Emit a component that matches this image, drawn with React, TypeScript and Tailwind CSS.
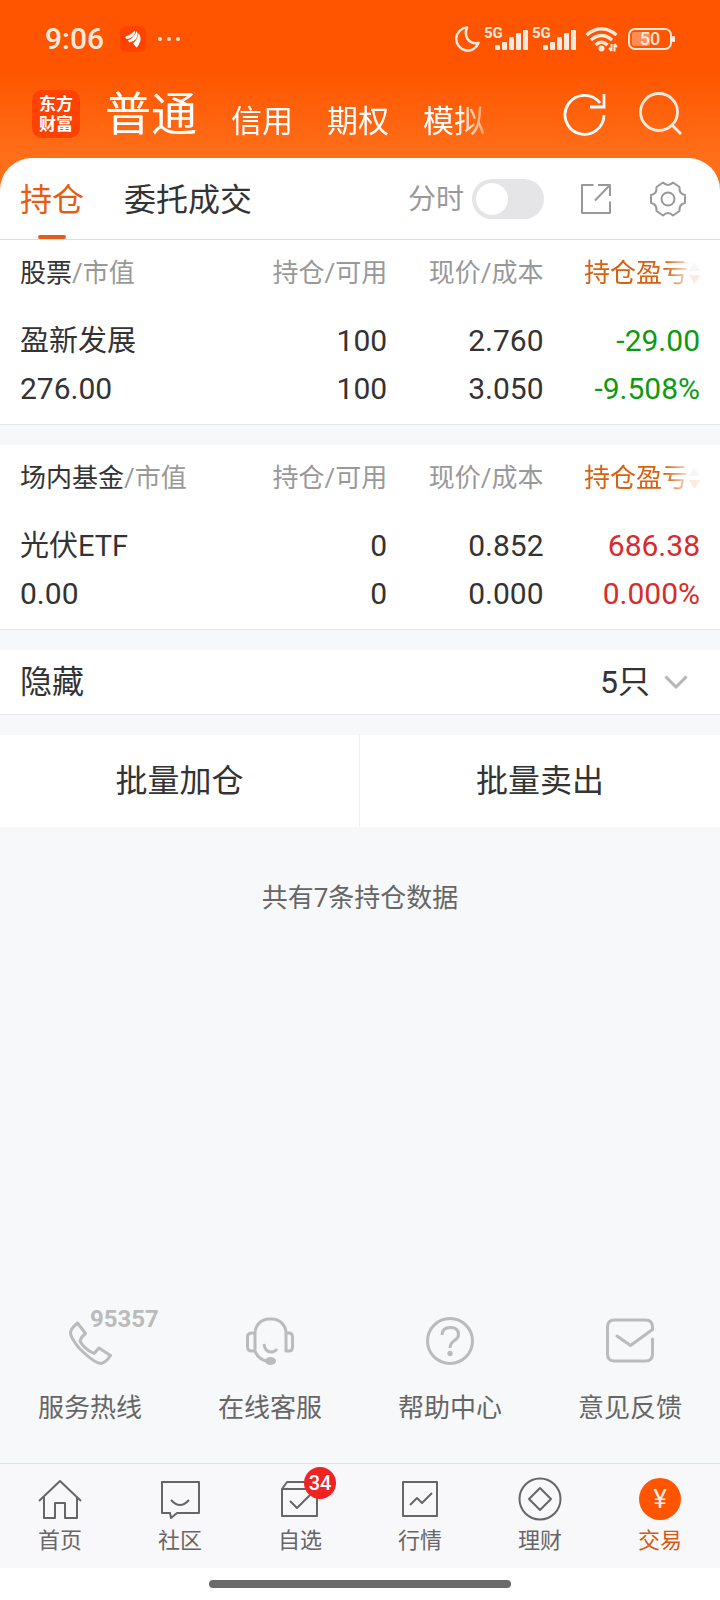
import { useState } from "react";

interface Holding {
  category: string;
  name: string;
  marketValue: string;
  amount: string;
  available: string;
  price: string;
  cost: string;
  profit: string;
  profitRate: string;
  color: string;
}

const accountTabs = ["信用", "期权", "模拟"];

const holdings: Holding[] = [
  {
    category: "股票",
    name: "盈新发展",
    marketValue: "276.00",
    amount: "100",
    available: "100",
    price: "2.760",
    cost: "3.050",
    profit: "-29.00",
    profitRate: "-9.508%",
    color: "text-[#0f9a0f]",
  },
  {
    category: "场内基金",
    name: "光伏ETF",
    marketValue: "0.00",
    amount: "0",
    available: "0",
    price: "0.852",
    cost: "0.000",
    profit: "686.38",
    profitRate: "0.000%",
    color: "text-[#d92b2b]",
  },
];

// 信号强度
function Signal() {
  return (
    <div className="relative flex h-9 w-11 items-center">
      <svg width="44" height="26" viewBox="0 0 44 26" fill="currentColor">
        <rect x="11" y="19" width="5" height="5" rx="1" />
        <rect x="18" y="16" width="5" height="8" rx="1" />
        <rect x="25" y="11" width="5" height="13" rx="1" />
        <rect x="32" y="7" width="5" height="17" rx="1" />
        <rect x="39" y="4" width="5" height="20" rx="1" />
      </svg>
      <span className="absolute top-0 left-0 text-[15px] leading-6 font-bold">5G</span>
    </div>
  );
}

function StatusBar() {
  return (
    <div className="flex h-[78px] items-center justify-between pr-[45px] pl-[45px] text-[#ffe8dc]">
      <div className="flex items-center">
        <span className="text-[30px] leading-9 font-medium">9:06</span>
        <span className="ml-4 flex size-[26px] items-center justify-center rounded-md bg-[#ff4200]">
          <svg width="18" height="18" viewBox="0 0 18 18" fill="#fff">
            <path d="M1 7Q7 5 11 0.500Q12 4 8 7Q5 9 2.500 9Z" />
            <path d="M4 10.500Q11 7 12.500 1Q15 4 12 9Q9 12 5.500 12.500Z" />
            <path d="M9 13.500Q14 9 14.500 3Q18 8 15.500 13Q14.500 16 12.500 17.500Z" />
          </svg>
        </span>
        <span className="ml-3 flex gap-[5px]">
          <i className="size-1 rounded-full bg-[#ffe8dc]" />
          <i className="size-1 rounded-full bg-[#ffe8dc]" />
          <i className="size-1 rounded-full bg-[#ffe8dc]" />
        </span>
      </div>

      <div className="flex items-center">
        <svg
          width="26"
          height="26"
          viewBox="0 0 26 26"
          fill="none"
          stroke="currentColor"
          strokeWidth="2.500"
          strokeLinejoin="round"
        >
          <path d="M13 1.500A11.500 11.500 0 1 0 24.500 17Q17 18 13.500 13Q10.500 8 13 1.500Z" />
        </svg>
        <div className="ml-1 flex gap-1">
          <Signal />
          <Signal />
        </div>
        <svg
          className="ml-[9px]"
          width="33"
          height="26"
          viewBox="0 0 33 26"
          fill="none"
          stroke="currentColor"
          strokeWidth="3.500"
        >
          <path d="M1.500 9Q16.500 -3.500 31.500 9M6 14Q16.500 5 27 14M10.500 19Q16.500 13.500 22.500 19" />
          <circle cx="16.500" cy="22.500" r="3" fill="currentColor" stroke="none" />
          <path d="M26.500 18V25M24 22L26.500 25M29.500 25.500V18M32 21L29.500 18" strokeWidth="2" />
        </svg>
        <svg className="ml-[10px]" width="47" height="22" viewBox="0 0 47 22">
          <rect x="4" y="4" width="18" height="14" rx="2" fill="#ff8d55" />
          <rect
            x="1"
            y="1"
            width="42"
            height="20"
            rx="6"
            fill="none"
            stroke="currentColor"
            strokeWidth="2"
          />
          <rect x="44" y="8" width="3" height="6" rx="1" fill="currentColor" />
          <text x="22" y="17" fontSize="18" fontWeight="500" textAnchor="middle" fill="currentColor">
            50
          </text>
        </svg>
      </div>
    </div>
  );
}

function Header() {
  return (
    <header className="flex h-20 items-center justify-between pr-[38px] pb-2 pl-8 text-white">
      <div className="flex items-center">
        <a
          href="#home"
          className="flex size-12 flex-col items-center justify-center rounded-[10px] bg-[#ff4200] text-[17px] leading-5 font-bold"
        >
          <span>东方</span>
          <span>财富</span>
        </a>
        <nav className="ml-[25px] flex items-end gap-[34px] [mask-image:linear-gradient(to_right,#000_93%,rgba(0,0,0,0.4))]">
          <button className="text-[46px] leading-[60px]">普通</button>
          {accountTabs.map((tab) => (
            <button key={tab} className="text-[31px] leading-[44px]">
              {tab}
            </button>
          ))}
        </nav>
      </div>
      <div className="flex gap-8">
        <button aria-label="刷新">
          <svg width="44" height="44" viewBox="0 0 44 44" fill="none" stroke="#fff" strokeWidth="2.800">
            <path d="M42 23A19.500 19.500 0 1 1 38 11M42 2V15H28" />
          </svg>
        </button>
        <button aria-label="搜索">
          <svg width="44" height="44" viewBox="0 0 44 44" fill="none" stroke="#ffeadf" strokeWidth="2.800">
            <circle cx="21" cy="20" r="18.500" />
            <path d="M34 33L43 42" />
          </svg>
        </button>
      </div>
    </header>
  );
}

function PositionTabs() {
  const [minute, setMinute] = useState(false);

  return (
    <div className="flex h-[82px] items-stretch justify-between rounded-t-[32px] border-b border-[#dcdcdc] bg-white pr-[34px] pl-5">
      <div className="flex gap-10 text-[32px] leading-10">
        <button className="flex flex-col items-center justify-between pt-[22px] text-[#ea5b12]">
          持仓
          <span className="h-1 w-7 rounded-full bg-[#e0601a]" />
        </button>
        <button className="flex pt-[22px] text-[#333]">委托成交</button>
      </div>
      <div className="flex items-center text-[#999]">
        <label htmlFor="minute" className="pt-0.5 text-[28px] leading-9">
          分时
        </label>
        <input
          id="minute"
          type="checkbox"
          role="switch"
          checked={minute}
          onChange={() => setMinute(!minute)}
          className="ml-2 flex h-10 w-[72px] appearance-none items-center rounded-full bg-[#e5e5e7] px-1 before:size-8 before:rounded-full before:bg-white checked:justify-end checked:bg-[#ff5500]"
        />
        <button aria-label="分享" className="ml-[37px]">
          <svg width="30" height="30" viewBox="0 0 30 30" fill="none" stroke="currentColor" strokeWidth="2" strokeLinejoin="round">
            <path d="M12.500 1H1V29H29V17.500M17 1H29V12M29 1L14 16.500" />
          </svg>
        </button>
        <button aria-label="设置" className="ml-[39px]">
          <svg width="36" height="36" viewBox="0 0 36 36" fill="none" stroke="currentColor" strokeWidth="2" strokeLinejoin="round">
            <path d="M35 14V22Q29 23 29.500 30L23 34.500Q18 29.500 13 34.500L6.500 30Q7 23 1 22V14Q7 13 6.500 6L13 1.500Q18 6.500 23 1.500L29.500 6Q29 13 35 14Z" />
            <circle cx="18" cy="18" r="6.500" />
          </svg>
        </button>
      </div>
    </div>
  );
}

function HoldingTable({ item }: { item: Holding }) {
  return (
    <section className="border-b border-[#e8e8ea] bg-white px-5 pt-px pb-[11px]">
      <table className="w-full table-fixed text-right text-[#333]">
        <thead className="text-[26px] leading-9 text-[#999]">
          <tr className="h-16">
            <th className="w-[31%] text-left font-normal whitespace-nowrap">
              <span className="text-[#333]">{item.category}</span>/市值
            </th>
            <th className="w-[23%] font-normal whitespace-nowrap">持仓/可用</th>
            <th className="w-[23%] font-normal whitespace-nowrap">现价/成本</th>
            <th className="w-[23%] font-normal">
              <button className="inline-flex items-center gap-px align-top whitespace-nowrap text-[#d9600f] [mask-image:linear-gradient(to_right,#000_70%,rgba(0,0,0,0.12)_92%)]">
                持仓盈亏
                <svg width="11" height="22" viewBox="0 0 11 22">
                  <path d="M5.500 0L11 9H0Z" fill="#bbb" />
                  <path d="M5.500 22L11 13H0Z" fill="#ff5500" />
                </svg>
              </button>
            </th>
          </tr>
        </thead>
        <tbody className="text-[30px] leading-9">
          <tr className="h-[60px]">
            <td className="pt-3 text-left text-[29px]">{item.name}</td>
            <td className="pt-3">{item.amount}</td>
            <td className="pt-3">{item.price}</td>
            <td className={`pt-3 ${item.color}`}>{item.profit}</td>
          </tr>
          <tr className="h-12">
            <td className="text-left">{item.marketValue}</td>
            <td>{item.available}</td>
            <td>{item.cost}</td>
            <td className={item.color}>{item.profitRate}</td>
          </tr>
        </tbody>
      </table>
    </section>
  );
}

const services = [
  {
    label: "服务热线",
    badge: "95357",
    icon: (
      <path d="M11.500 6L19.500 16.500Q15 20 14 24Q18 32 28 36.500L33 31L44.500 38.500Q40 45.500 35 46.500Q28 46 13 31Q4 20 4.500 15Q5.500 11 11.500 6Z" />
    ),
  },
  {
    label: "在线客服",
    icon: (
      <>
        <path d="M9 33V16A14 14 0 0 1 23 2H26A14 14 0 0 1 40 16V34H43Q46.500 34 46.500 30V20Q46.500 16 43 16H40M9 16H6Q1.500 16 1.500 20V30Q1.500 34 6 34H9Q12 42 20 44" />
        <path d="M18 27Q19 35 25 35Q29 35 31 32" />
        <ellipse cx="24.500" cy="44" rx="4" ry="2.500" fill="currentColor" />
      </>
    ),
  },
  {
    label: "帮助中心",
    icon: (
      <>
        <circle cx="24" cy="24" r="22.500" />
        <path d="M16 18Q16 10.500 24.500 10.500Q32.500 10.500 32.500 17.500Q32.500 21 28.500 23.500Q24 26.500 24 31" />
        <circle cx="24" cy="36.500" r="1.200" fill="currentColor" />
      </>
    ),
  },
  {
    label: "意见反馈",
    icon: (
      <path
        d="M46.500 22V37Q46.500 44 39.500 44H8.500Q1.500 44 1.500 37V10Q1.500 3 8.500 3H39.500Q46.500 3 46.500 10V12.500L24.500 28.500L11 19"
        strokeLinecap="round"
      />
    ),
  },
];

const bottomTabs = [
  {
    label: "首页",
    icon: <path d="M1 24L22 4L43 24M6 20V41H17V26H27V41H39V20" />,
  },
  {
    label: "社区",
    icon: <path d="M4 5H41V36H19L13 41L12 36H4ZM13 23Q22 33 31 23" />,
  },
  {
    label: "自选",
    badge: "34",
    icon: <path d="M4 12L9 5H34L39 12V39H4ZM4 12H39M12 24L19 31L32 18" />,
  },
  {
    label: "行情",
    icon: <path d="M5 5H39V39H5ZM12 28L19 21L24 26L34 16" />,
  },
  {
    label: "理财",
    icon: (
      <>
        <circle cx="22" cy="22" r="20.500" />
        <path d="M22 11L33 22L22 33L11 22Z" />
      </>
    ),
  },
];

export default function App() {
  return (
    <div className="flex min-h-screen flex-col bg-[#f7f8fa] font-['Roboto','Noto_Sans_CJK_SC',sans-serif]">
      <div className="bg-[linear-gradient(to_bottom,#ff5500_70px,#ff6f1a_158px)]">
        <StatusBar />
        <Header />
        <PositionTabs />
      </div>

      <main className="flex flex-1 flex-col gap-5">
        {holdings.map((item) => (
          <HoldingTable key={item.category} item={item} />
        ))}

        {/* 隐藏持仓 */}
        <button className="flex h-[65px] items-center justify-between border-b border-[#e8e8ea] bg-white pr-8 pl-5 text-[32px] leading-10 text-[#333]">
          <span>隐藏</span>
          <span className="flex items-center gap-[14px]">
            5只
            <svg width="24" height="14" viewBox="0 0 24 14" fill="none" stroke="#b5b5b5" strokeWidth="3">
              <path d="M1.500 1.500L12 12L22.500 1.500" />
            </svg>
          </span>
        </button>

        {/* 批量操作 */}
        <div className="grid h-[92px] grid-cols-2 bg-white text-[32px] leading-10 text-[#333]">
          <button className="border-r border-[#f0f0f2]">批量加仓</button>
          <button>批量卖出</button>
        </div>

        <p className="pt-[33px] text-center text-[26px] leading-9 text-[#666]">共有7条持仓数据</p>
      </main>

      <div className="grid grid-cols-4 pb-[37px]">
        {services.map((item) => (
          <a key={item.label} href="#service" className="flex flex-col items-center gap-[25px] text-[#666]">
            <span className="relative text-[#bbb]">
              <svg
                width="48"
                height="48"
                viewBox="0 0 48 48"
                fill="none"
                stroke="currentColor"
                strokeWidth="3"
                strokeLinejoin="round"
              >
                {item.icon}
              </svg>
              {item.badge && (
                <span className="absolute -top-3 left-6 text-[24px] leading-7 font-bold">{item.badge}</span>
              )}
            </span>
            <span className="text-[26px] leading-9">{item.label}</span>
          </a>
        ))}
      </div>

      {/* 底部导航 */}
      <nav className="grid grid-cols-6 border-t border-[#e2e3e5] bg-[#f8f8fa] pt-[13px] pb-[13px] text-[22px] leading-7 text-[#666]">
        {bottomTabs.map((tab) => (
          <a key={tab.label} href="#tab" className="flex flex-col items-center gap-1.5">
            <span className="relative">
              <svg
                width="44"
                height="44"
                viewBox="0 0 44 44"
                fill="none"
                stroke="currentColor"
                strokeWidth="2"
                strokeLinejoin="round"
              >
                {tab.icon}
              </svg>
              {tab.badge && (
                <span className="absolute -top-[10px] left-[26px] flex size-8 items-center justify-center rounded-full bg-[#f02323] text-[20px] leading-6 font-medium text-white">
                  {tab.badge}
                </span>
              )}
            </span>
            {tab.label}
          </a>
        ))}
        <a href="#trade" className="flex flex-col items-center gap-1.5 text-[#d9560f]">
          <span className="flex h-11 items-center">
            <span className="flex size-[42px] items-center justify-center rounded-full bg-[#ff5500] text-[26px] text-[#ffeee5]">
              ¥
            </span>
          </span>
          交易
        </a>
      </nav>
      <div className="flex h-8 justify-center bg-white pt-3">
        <div className="h-2 w-[42%] rounded-full bg-[#6b6b6b]" />
      </div>
    </div>
  );
}
